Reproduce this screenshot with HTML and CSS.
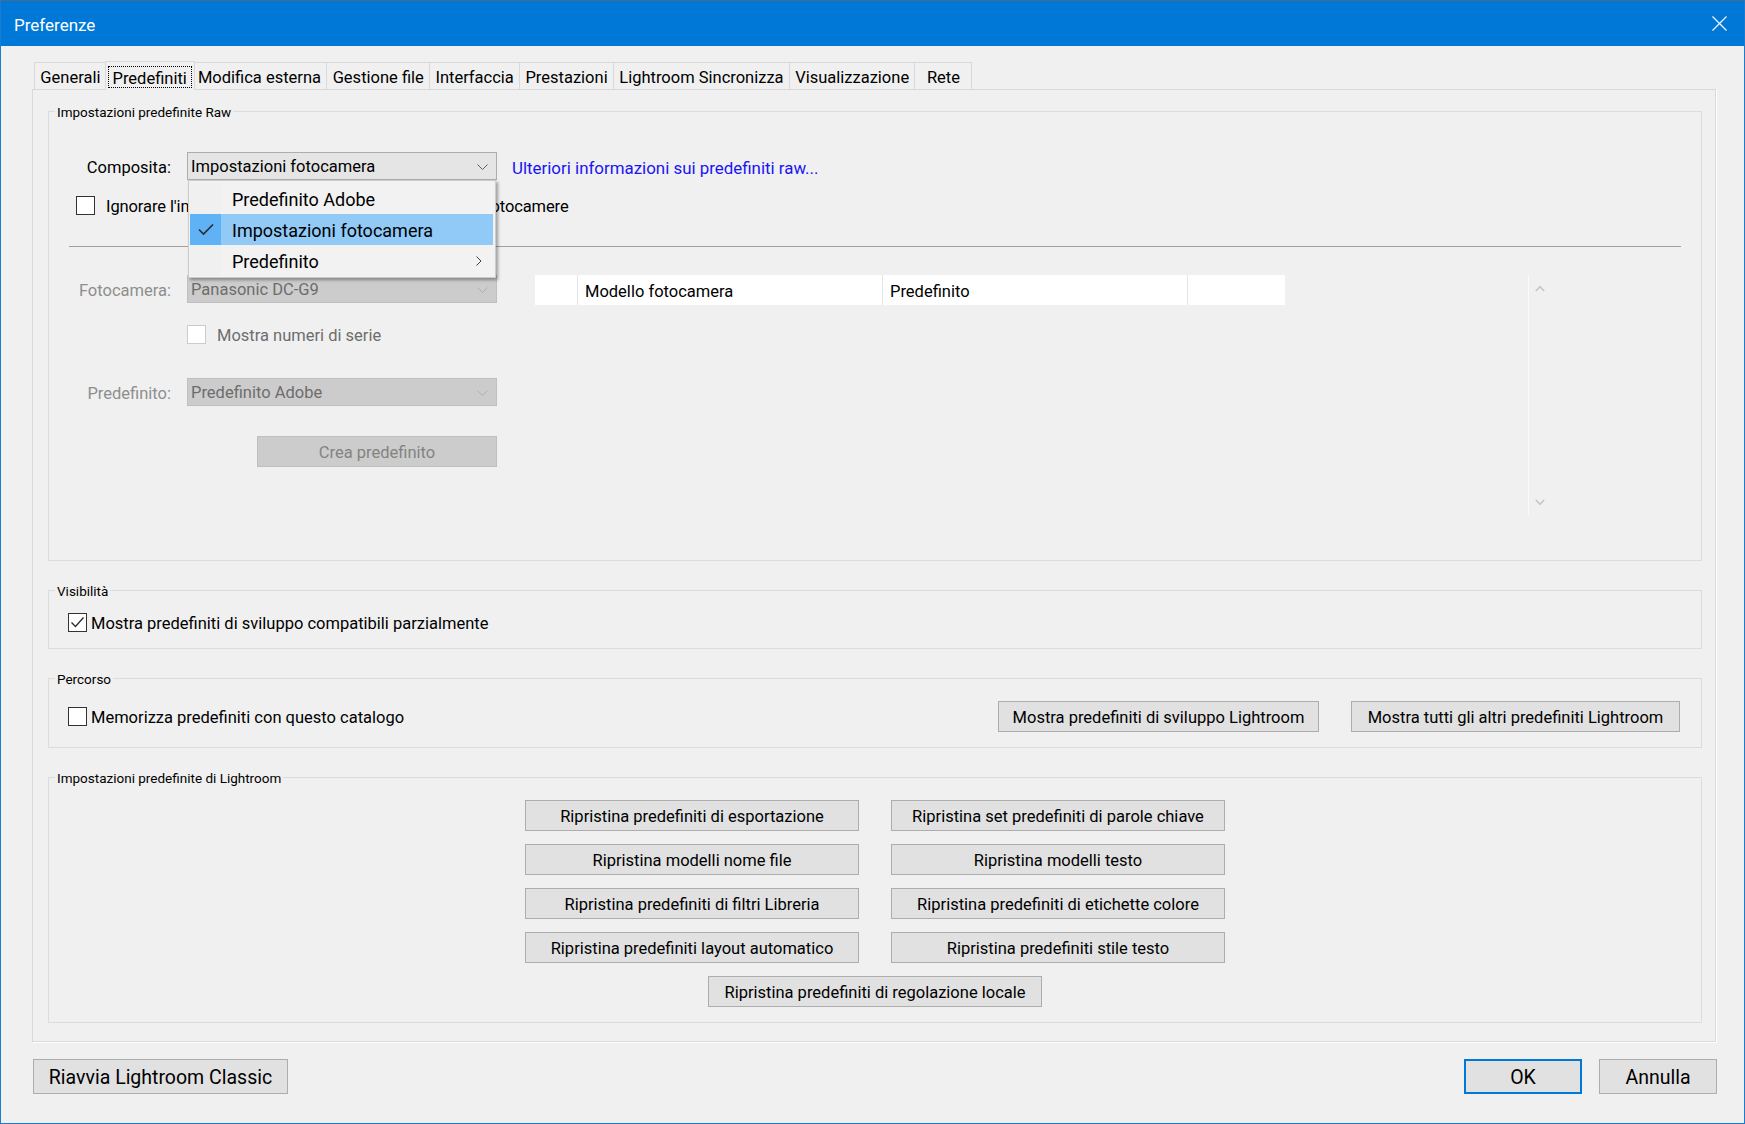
FILE: index.html
```html
<!DOCTYPE html>
<html lang="it">
<head>
<meta charset="utf-8">
<title>Preferenze</title>
<link rel="stylesheet" href="styles.css">
</head>
<body>
<div class="window">
  <div class="titlebar">
    <span class="title">Preferenze</span>
    <svg class="close" width="15" height="15" viewBox="0 0 15 15"><path d="M0.5 0.5 L14.5 14.5 M14.5 0.5 L0.5 14.5" stroke="#ffffff" stroke-width="1.1" fill="none"/></svg>
  </div>
  <div class="client">
    <div class="tabs">
      <div class="tab">Generali</div>
      <div class="tab selected"><span class="focus">Predefiniti</span></div>
      <div class="tab">Modifica esterna</div>
      <div class="tab">Gestione file</div>
      <div class="tab">Interfaccia</div>
      <div class="tab">Prestazioni</div>
      <div class="tab">Lightroom Sincronizza</div>
      <div class="tab">Visualizzazione</div>
      <div class="tab">Rete</div>
    </div>
    <div class="page">
      <div class="group g-raw">
        <div class="group-title">Impostazioni predefinite Raw</div>
        <div class="row-composita">
          <div class="label">Composita:</div>
          <div class="combo-wrap">
            <div class="combo">
              <span>Impostazioni fotocamera</span>
              <svg width="11" height="6" viewBox="0 0 11 6"><path d="M0.5 0.5 L5.5 5.5 L10.5 0.5" stroke="#606060" stroke-width="1" fill="none"/></svg>
            </div>
            <div class="popup">
              <div class="item"><span class="chk"></span><span class="itext">Predefinito Adobe</span></div>
              <div class="item active"><span class="chk"><svg width="16" height="13" viewBox="0 0 16 13"><path d="M1 6.5 L5.5 11 L15 1.5" stroke="#2b2b2b" stroke-width="1.6" fill="none"/></svg></span><span class="itext">Impostazioni fotocamera</span></div>
              <div class="item"><span class="chk"></span><span class="itext">Predefinito</span><svg class="sub" width="6" height="10" viewBox="0 0 6 10"><path d="M0.5 0.5 L5 5 L0.5 9.5" stroke="#404040" stroke-width="1" fill="none"/></svg></div>
            </div>
          </div>
          <span class="link">Ulteriori informazioni sui predefiniti raw...</span>
        </div>
        <div class="row-override">
          <span class="cb"></span>
          <span class="cbtext-wide">Ignorare l'impostazione globale per alcuni modelli di fotocamere</span>
        </div>
        <div class="separator"></div>
        <div class="lower">
          <div class="form">
            <div class="frow f1">
              <div class="label dis">Fotocamera:</div>
              <div class="combo disabled">
                <span>Panasonic DC-G9</span>
                <svg width="11" height="6" viewBox="0 0 11 6"><path d="M0.5 0.5 L5.5 5.5 L10.5 0.5" stroke="#b0b0b0" stroke-width="1" fill="none"/></svg>
              </div>
            </div>
            <div class="frow f2">
              <span class="cb dis"></span>
              <span class="distext">Mostra numeri di serie</span>
            </div>
            <div class="frow f3">
              <div class="label dis">Predefinito:</div>
              <div class="combo disabled">
                <span>Predefinito Adobe</span>
                <svg width="11" height="6" viewBox="0 0 11 6"><path d="M0.5 0.5 L5.5 5.5 L10.5 0.5" stroke="#b0b0b0" stroke-width="1" fill="none"/></svg>
              </div>
            </div>
            <div class="frow f4">
              <div class="btn btn-disabled">Crea predefinito</div>
            </div>
          </div>
          <div class="list">
            <div class="list-body">
              <div class="header">
                <div class="hcell c0"></div>
                <div class="hcell c1">Modello fotocamera</div>
                <div class="hcell c2">Predefinito</div>
                <div class="hcell c3"></div>
              </div>
            </div>
            <div class="scrollbar">
              <svg width="10" height="7" viewBox="0 0 10 7"><path d="M0.8 6 L5 1.8 L9.2 6" stroke="#c4c4c4" stroke-width="1.6" fill="none"/></svg>
              <svg width="10" height="7" viewBox="0 0 10 7"><path d="M0.8 1 L5 5.2 L9.2 1" stroke="#c4c4c4" stroke-width="1.6" fill="none"/></svg>
            </div>
          </div>
        </div>
      </div>

      <div class="group g-vis">
        <div class="group-title">Visibilità</div>
        <div class="cbrow">
          <span class="cb checked"><svg width="15" height="13" viewBox="0 0 15 13"><path d="M1.5 6.5 L5.5 10.5 L13.5 1.5" stroke="#2b2b2b" stroke-width="1.3" fill="none"/></svg></span>
          <span class="cbtext">Mostra predefiniti di sviluppo compatibili parzialmente</span>
        </div>
      </div>

      <div class="group g-path">
        <div class="group-title">Percorso</div>
        <div class="cbrow path-row">
          <span class="cb"></span>
          <span class="cbtext">Memorizza predefiniti con questo catalogo</span>
          <div class="btn w-dev">Mostra predefiniti di sviluppo Lightroom</div>
          <div class="btn w-all">Mostra tutti gli altri predefiniti Lightroom</div>
        </div>
      </div>

      <div class="group g-lr">
        <div class="group-title">Impostazioni predefinite di Lightroom</div>
        <div class="reset-grid">
          <div class="btn">Ripristina predefiniti di esportazione</div>
          <div class="btn">Ripristina set predefiniti di parole chiave</div>
          <div class="btn">Ripristina modelli nome file</div>
          <div class="btn">Ripristina modelli testo</div>
          <div class="btn">Ripristina predefiniti di filtri Libreria</div>
          <div class="btn">Ripristina predefiniti di etichette colore</div>
          <div class="btn">Ripristina predefiniti layout automatico</div>
          <div class="btn">Ripristina predefiniti stile testo</div>
          <div class="btn wide">Ripristina predefiniti di regolazione locale</div>
        </div>
      </div>
    </div>
    <div class="footer">
      <div class="btn fbtn restart">Riavvia Lightroom Classic</div>
      <div class="btn fbtn ok">OK</div>
      <div class="btn fbtn cancel">Annulla</div>
    </div>
  </div>
</div>
</body>
</html>
```

FILE: styles.css
```css
* { box-sizing: border-box; }
html, body { margin: 0; padding: 0; }
body {
  width: 1745px;
  height: 1124px;
  overflow: hidden;
  background: #f0f0f0;
  font-family: Roboto, "Noto Sans", "Liberation Sans", sans-serif;
  font-size: 16.5px;
  color: #000;
}
.window {
  width: 1745px;
  height: 1124px;
  border: 1px solid #1a7cd0;
  border-top-color: #4d6a85;
  background: #f0f0f0;
  display: flex;
  flex-direction: column;
}
.titlebar {
  height: 45px;
  flex: none;
  background: #0078d7;
  color: #fff;
  display: flex;
  align-items: center;
  justify-content: space-between;
  padding: 2px 17px 0 13px;
}
.title { font-size: 17px; }
.close { margin-top: -2px; }
.client { flex: 1; padding-top: 15px; }

/* tabs */
.tabs {
  display: flex;
  align-items: flex-end;
  height: 28px;
  margin-left: 33px;
}
.tab {
  height: 27px;
  min-width: 58px;
  text-align: center;
  line-height: 22px;
  padding: 4px 5.3px 0;
  border: 1px solid #d9d9d9;
  border-bottom: none;
  margin-left: -1px;
  white-space: nowrap;
  background: #f0f0f0;
}
.tab:first-child { margin-left: 0; }
.tab.selected {
  height: 29px;
  margin: 0 -2px -1px -2px;
  padding: 4px 2px 2px;
  position: relative;
  z-index: 1;
}
.focus {
  display: block;
  height: 22px;
  line-height: 21px;
  padding: 1px 3.8px 0;
  border: 1px dotted #000;
}

/* page */
.page {
  width: 1684px;
  height: 953px;
  margin-left: 31px;
  border: 1px solid #d9d9d9;
  box-shadow: 1px 1px 0 #ffffff;
  padding: 21px 13px 0 15px;
}
.group { border: 1px solid #dcdcdc; }
.group + .group { margin-top: 29px; }
.group-title {
  width: max-content;
  height: 18px;
  line-height: 18px;
  margin: -10px 0 0 6px;
  padding: 1px 2px 0;
  font-size: 13.5px;
  background: #f0f0f0;
}

/* raw group */
.g-raw { padding-bottom: 45px; }
.row-composita {
  display: flex;
  align-items: center;
  height: 28px;
  margin-top: 32px;
}
.label {
  width: 122px;
  flex: none;
  text-align: right;
  margin-right: 16px;
  padding-top: 3px;
  white-space: nowrap;
}
.label.dis { color: #8e8e8e; }
.combo-wrap { position: relative; width: 310px; height: 28px; flex: none; }
.combo {
  width: 310px;
  height: 28px;
  flex: none;
  border: 1px solid #adadad;
  background: #e5e5e5;
  display: flex;
  align-items: center;
  justify-content: space-between;
  padding: 1px 8px 0 3px;
  white-space: nowrap;
}
.combo.disabled {
  background: #cccccc;
  border-color: #bfbfbf;
  color: #6d6d6d;
}
.link { margin-left: 15px; padding-top: 3px; color: #1a14f5; white-space: nowrap; font-size: 16.9px; }

.popup {
  position: absolute;
  top: 28px;
  left: 1px;
  width: 308px;
  background: #f2f2f2;
  border: 1px solid #cccccc;
  padding: 2px 2px 1px 1px;
  box-shadow: 2px 2px 3px rgba(0, 0, 0, 0.35);
  z-index: 10;
  font-size: 18px;
}
.item {
  height: 31px;
  display: flex;
  align-items: center;
  white-space: nowrap;
}
.chk {
  width: 31px;
  height: 31px;
  flex: none;
  display: flex;
  align-items: center;
  justify-content: center;
  background: #f0f0f0;
}
.itext { padding: 1px 0 0 11px; flex: 1; }
.item.active { background: #91c9f7; }
.item.active .chk { background: #5fb2f5; }
.sub { margin-right: 11px; }

.row-override {
  display: flex;
  align-items: center;
  height: 19px;
  margin-top: 16px;
  padding-left: 27px;
}
.cbtext-wide { margin-left: 11px; padding-top: 2px; white-space: nowrap; letter-spacing: -0.1px; }

.cb {
  width: 19px;
  height: 19px;
  flex: none;
  border: 1px solid #333333;
  background: #ffffff;
  display: flex;
  align-items: center;
  justify-content: center;
}
.cb.dis { border-color: #cccccc; }

.separator {
  height: 1px;
  margin: 31px 20px 0;
  background: #a0a0a0;
}
.lower {
  display: flex;
  align-items: flex-start;
  margin-top: 28px;
}
.form { width: 448px; flex: none; }
.frow { display: flex; align-items: center; }
.f1 { height: 28px; }
.f2 { height: 19px; margin-top: 22px; padding-left: 138px; }
.distext { margin-left: 11px; padding-top: 2px; color: #6d6d6d; white-space: nowrap; }
.f3 { height: 28px; margin-top: 34px; }
.f4 { height: 31px; margin-top: 30px; justify-content: flex-end; }

.btn {
  height: 31px;
  border: 1px solid #adadad;
  background: #e1e1e1;
  display: flex;
  align-items: center;
  justify-content: center;
  padding-top: 2px;
  white-space: nowrap;
  flex: none;
}
.btn-disabled {
  width: 240px;
  background: #cccccc;
  border-color: #bfbfbf;
  color: #838383;
}

.list {
  display: flex;
  width: 1015px;
  height: 240px;
  margin-left: 38px;
  flex: none;
}
.list-body { width: 993px; flex: none; }
.header { display: flex; height: 30px; }
.hcell {
  height: 30px;
  background: #ffffff;
  display: flex;
  align-items: center;
  padding: 3px 0 0 7px;
  border-left: 1px solid #e5e5e5;
  white-space: nowrap;
}
.c0 { width: 42px; border-left: none; }
.c1 { width: 305px; }
.c2 { width: 305px; }
.c3 { width: 98px; }
.scrollbar {
  width: 22px;
  flex: none;
  border-left: 1px solid #fafafa;
  display: flex;
  flex-direction: column;
  align-items: center;
  justify-content: space-between;
  padding: 10px 0 9px;
}

/* visibility / path */
.cbrow {
  display: flex;
  align-items: center;
}
.g-vis .cbrow { height: 19px; margin: 14px 0 16px; padding-left: 19px; }
.cbtext { margin-left: 4px; padding-top: 2px; white-space: nowrap; }
.path-row { height: 31px; margin: 14px 0 15px; padding: 0 21px 0 19px; }
.w-dev { width: 321px; margin-left: auto; }
.w-all { width: 329px; margin-left: 32px; }

/* lightroom defaults */
.reset-grid {
  display: grid;
  grid-template-columns: 334px 334px;
  grid-auto-rows: 31px;
  column-gap: 32px;
  row-gap: 13px;
  justify-content: center;
  margin: 14px 0 15px;
}
.reset-grid .wide {
  grid-column: 1 / -1;
  justify-self: center;
  width: 334px;
}

/* footer */
.footer {
  display: flex;
  margin-top: 17px;
  padding: 0 27px 0 32px;
}
.fbtn { height: 35px; font-size: 19.5px; }
.restart { width: 255px; }
.ok { width: 118px; margin-left: auto; border: 2px solid #0078d7; }
.cancel { width: 118px; margin-left: 17px; }
```
